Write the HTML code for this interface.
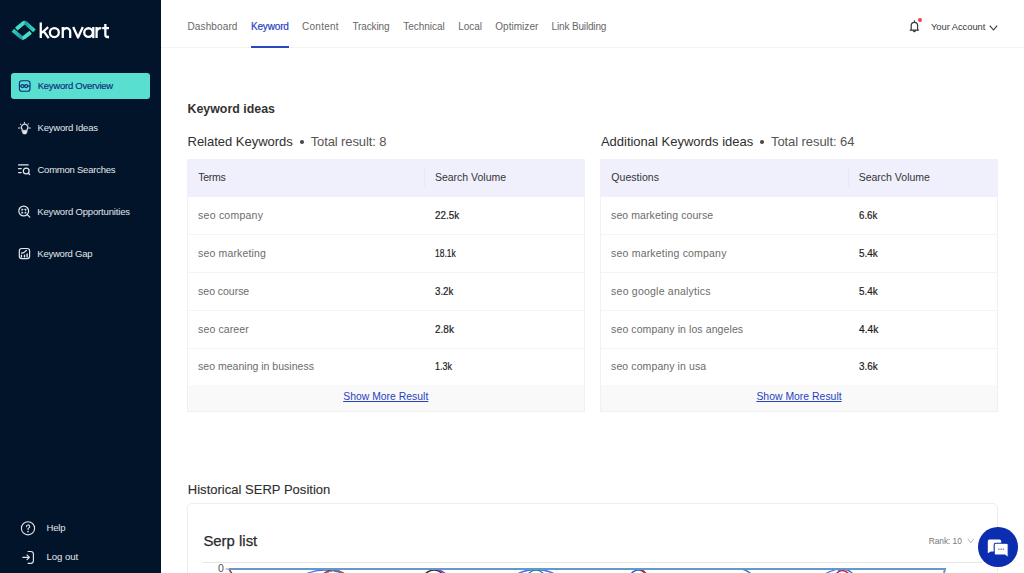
<!DOCTYPE html>
<html><head><meta charset="utf-8"><title>Konvart</title>
<style>
html,body{margin:0;padding:0;width:1024px;height:573px;overflow:hidden;background:#fff;}
body{position:relative;font-family:"Liberation Sans",sans-serif;}
#side{position:absolute;left:0;top:0;width:161px;height:573px;background:#011429;}
.t{position:absolute;white-space:nowrap;}
svg{display:block;}
</style></head><body>
<div id="side"></div>
<svg style="position:absolute;left:0;top:0" width="40" height="45" viewBox="0 0 40 45" fill="none">
<defs>
<linearGradient id="ga" gradientUnits="userSpaceOnUse" x1="15" y1="0" x2="35" y2="0">
<stop offset="0" stop-color="#43dfca"/><stop offset="0.45" stop-color="#3fdcc8"/><stop offset="0.52" stop-color="#1a99a3"/><stop offset="1" stop-color="#34e3c6"/></linearGradient>
<linearGradient id="gb" gradientUnits="userSpaceOnUse" x1="12" y1="0" x2="32" y2="0">
<stop offset="0" stop-color="#2ed8c0"/><stop offset="0.48" stop-color="#1a9ca4"/><stop offset="0.56" stop-color="#45e2cb"/><stop offset="1" stop-color="#48e0cc"/></linearGradient>
</defs>
<path d="M16.3 29 L23.2 23.2 Q24.6 22.1 26 23.3 L34.4 30.9" stroke="url(#ga)" stroke-width="3.8"/>
<path d="M12.9 30.3 L21.3 37.4 Q22.7 38.6 24.1 37.4 L30.7 32.2" stroke="url(#gb)" stroke-width="3.8"/>
</svg>
<svg style="position:absolute;left:0;top:0" width="120" height="45" viewBox="0 0 120 45" fill="none" stroke="#fff" stroke-width="2.3">
<path d="M40.75 22.6 V38.1 M48.2 27.2 L41.6 33 M43.8 31.3 L48.7 38.1"/>
<circle cx="54.35" cy="32.55" r="4.5"/>
<path d="M62.75 27 V38.1 M62.75 38.1 V31.9 a3.72 3.72 0 0 1 7.45 0 V38.1"/>
<path d="M73.2 27 L78 37.5 L82.8 27" stroke-linejoin="round"/>
<circle cx="88.5" cy="32.55" r="4.3"/>
<path d="M93.3 27 V38.1"/>
<path d="M96.55 27 V38.1 M96.55 32.2 Q96.8 28.1 101.3 28.1"/>
<path d="M105.35 24 V34.8 Q105.35 37 107.5 37 H109 M102.2 28.2 H109"/>
</svg>
<div style="position:absolute;left:11px;top:73px;width:139px;height:26px;background:#58dfcf;border-radius:3px"></div>
<svg style="position:absolute;left:18px;top:80px" width="13" height="13" viewBox="0 0 13 13" fill="none" stroke="#102d7c" stroke-width="1.15">
<rect x="1.4" y="0.75" width="10.6" height="10.5" rx="2.5"/>
<circle cx="4.5" cy="6.1" r="1.55"/><circle cx="8.1" cy="6.1" r="1.55"/><path d="M1.6 6.1h1.3 M6 6.1h0.6 M9.7 6.1h2.2"/>
</svg>
<div class="t" style="left:37.70px;top:80px;font-size:9.5px;line-height:11px;color:#102d7c;letter-spacing:-0.246px;-webkit-text-stroke:0.15px #102d7c;">Keyword Overview</div>
<div class="t" style="left:37.50px;top:122px;font-size:9.5px;line-height:11px;color:#e4e7ec;letter-spacing:-0.195px;">Keyword Ideas</div>
<div class="t" style="left:37.50px;top:164px;font-size:9.5px;line-height:11px;color:#e4e7ec;letter-spacing:-0.237px;">Common Searches</div>
<div class="t" style="left:37.30px;top:206px;font-size:9.5px;line-height:11px;color:#e4e7ec;letter-spacing:-0.170px;">Keyword Opportunities</div>
<div class="t" style="left:37.30px;top:248px;font-size:9.5px;line-height:11px;color:#e4e7ec;letter-spacing:-0.236px;">Keyword Gap</div>
<div class="t" style="left:46.60px;top:522px;font-size:9.5px;line-height:11px;color:#e4e7ec;letter-spacing:-0.213px;">Help</div>
<div class="t" style="left:46.60px;top:551px;font-size:9.6px;line-height:12px;color:#e4e7ec;letter-spacing:-0.088px;">Log out</div>
<svg style="position:absolute;left:14px;top:118px" width="22" height="20" viewBox="14 118 22 20" fill="none" stroke="#e4e7ec" stroke-width="1.1" stroke-linecap="round">
<path d="M24.4 122.3v0.8 M20.6 124.1l0.2 0.2 M28.3 123.9l-0.2 0.2 M18.5 128h1.4 M29 128h1.3"/>
<path d="M22.3 129.6 A3.2 3.2 0 1 1 27 129.6"/>
<path d="M21.9 130.2 H27.4 L26.6 133.2 Q26.3 134 25.5 134 H23.8 Q23 134 22.7 133.2 Z M24.65 131.6 L24.65 131.6" fill="#e4e7ec" stroke-width="0.5"/>
</svg>
<svg style="position:absolute;left:14px;top:160px" width="22" height="20" viewBox="14 160 22 20" fill="none" stroke="#e4e7ec" stroke-width="1.25" stroke-linecap="round">
<path d="M18.6 164.9h9.6 M18.6 168.7h2.6 M18.6 172.5h2.6"/>
<circle cx="26.2" cy="171" r="2.9"/><path d="M28.3 173.1l1.3 1.4"/>
</svg>
<svg style="position:absolute;left:14px;top:202px" width="22" height="20" viewBox="14 202 22 20" fill="none" stroke="#e4e7ec" stroke-width="1.2" stroke-linecap="round">
<circle cx="23.7" cy="211" r="4.9"/><path d="M27.3 214.6l2.5 2.5"/>
<path d="M22 210.2v-0.8h0.8 M24.9 209.4h0.8v0.8 M25.7 212v0.8h-0.8 M22.8 212.8h-0.8v-0.8"/>
</svg>
<svg style="position:absolute;left:14px;top:243px" width="22" height="20" viewBox="14 243 22 20" fill="none" stroke="#e4e7ec" stroke-width="1.2" stroke-linecap="round">
<rect x="19.3" y="248.5" width="10.3" height="10.1" rx="2.4"/>
<path d="M21.5 256.9v-1.6 M24.5 256.9v-1.6 M27.1 256.9v-2.9" stroke-width="1.4"/>
<path d="M21.5 253.2 L23.7 252.6 L26.1 250.6" />
<circle cx="26.2" cy="250.5" r="0.7" fill="#e4e7ec" stroke="none"/>
</svg>
<svg style="position:absolute;left:16px;top:515px" width="24" height="25" viewBox="16 515 24 25" fill="none" stroke="#e4e7ec" stroke-width="1.1" stroke-linecap="round">
<circle cx="28" cy="528.3" r="6.6"/>
<path d="M26.4 526.6 a1.65 1.65 0 1 1 2.3 1.5 c-0.45 0.2 -0.65 0.45 -0.65 0.9 v0.5"/>
<circle cx="28.05" cy="531.6" r="0.3" fill="#e4e7ec"/>
</svg>
<svg style="position:absolute;left:16px;top:545px" width="24" height="25" viewBox="16 545 24 25" fill="none" stroke="#e4e7ec" stroke-width="1.15" stroke-linecap="round" stroke-linejoin="round">
<path d="M28.1 551.5h2.8 a2.5 2.5 0 0 1 2.5 2.5 v6.8 a2.5 2.5 0 0 1 -2.5 2.5 h-2.8"/>
<path d="M22.8 557.3h6.6 M27 554.9l2.4 2.4-2.4 2.4"/>
</svg>
<div style="position:absolute;left:161px;top:47px;width:863px;height:1px;background:#f3f3f3"></div>
<div class="t" style="left:187.50px;top:21px;font-size:10px;line-height:12px;color:#676767;letter-spacing:0.122px;">Dashboard</div>
<div class="t" style="left:302.00px;top:21px;font-size:10px;line-height:12px;color:#676767;letter-spacing:0.263px;">Content</div>
<div class="t" style="left:352.50px;top:21px;font-size:10px;line-height:12px;color:#676767;letter-spacing:-0.139px;">Tracking</div>
<div class="t" style="left:403.30px;top:21px;font-size:10px;line-height:12px;color:#676767;letter-spacing:-0.024px;">Technical</div>
<div class="t" style="left:458.30px;top:21px;font-size:10px;line-height:12px;color:#676767;letter-spacing:-0.052px;">Local</div>
<div class="t" style="left:495.30px;top:21px;font-size:10px;line-height:12px;color:#676767;letter-spacing:0.027px;">Optimizer</div>
<div class="t" style="left:551.60px;top:21px;font-size:10px;line-height:12px;color:#676767;letter-spacing:-0.159px;">Link Building</div>
<div class="t" style="left:250.90px;top:21px;font-size:10px;line-height:12px;color:#2942c2;letter-spacing:-0.151px;-webkit-text-stroke:0.2px #2942c2;">Keyword</div>
<div style="position:absolute;left:251px;top:45.5px;width:38px;height:2px;background:#2b46c4"></div>
<svg style="position:absolute;left:900px;top:12px" width="30" height="26" viewBox="900 12 30 26" fill="none" stroke="#383838" stroke-width="1.2" stroke-linejoin="round" stroke-linecap="round">
<path d="M914.4 20.9 v0.6"/>
<path d="M911.2 29.8 V25.6 a3.2 3.2 0 0 1 6.4 0 V29.8"/>
<path d="M910.2 30.1 H918.6"/>
<path d="M913.2 30.7 L914.4 31.7 L915.6 30.7"/>
</svg>
<div style="position:absolute;left:918.3px;top:18.1px;width:4.2px;height:4.2px;border-radius:50%;background:#f2434b"></div>
<div class="t" style="left:931.00px;top:21px;font-size:9.4px;line-height:11px;color:#3a3a3a;letter-spacing:-0.050px;">Your Account</div>
<svg style="position:absolute;left:989px;top:25px" width="9" height="6" viewBox="0 0 9 6" fill="none" stroke="#333" stroke-width="1.1"><path d="M0.8 0.6 L4.5 5 L8.2 0.6"/></svg>
<div class="t" style="left:187.50px;top:102px;font-size:12.4px;line-height:15px;color:#333333;letter-spacing:-0.002px;font-weight:bold;">Keyword ideas</div>
<div class="t" style="left:187.50px;top:134px;font-size:13px;line-height:16px;color:#2f2f2f;letter-spacing:-0.013px;">Related Keywords</div>
<div style="position:absolute;left:300.3px;top:140.2px;width:4px;height:4px;border-radius:50%;background:#444"></div>
<div class="t" style="left:310.70px;top:134px;font-size:13px;line-height:16px;color:#555;letter-spacing:-0.108px;">Total result: 8</div>
<div class="t" style="left:600.90px;top:134px;font-size:13px;line-height:16px;color:#2f2f2f;letter-spacing:-0.008px;">Additional Keywords ideas</div>
<div style="position:absolute;left:760px;top:140.2px;width:4px;height:4px;border-radius:50%;background:#444"></div>
<div class="t" style="left:771.00px;top:134px;font-size:13px;line-height:16px;color:#555;letter-spacing:-0.076px;">Total result: 64</div>
<div style="position:absolute;left:187px;top:159px;width:398px;height:252.5px;border:1px solid #f1f1f1;box-sizing:border-box;background:#fff"></div>
<div style="position:absolute;left:187px;top:159px;width:398px;height:38px;background:#eff0fc"></div>
<div style="position:absolute;left:424px;top:169px;width:1px;height:18px;background:#e9e7f3"></div>
<div class="t" style="left:198.30px;top:171px;font-size:10.5px;line-height:13px;color:#343434;letter-spacing:-0.296px;">Terms</div>
<div class="t" style="left:434.90px;top:171px;font-size:10.5px;line-height:13px;color:#343434;letter-spacing:-0.001px;">Search Volume</div>
<div class="t" style="left:198.10px;top:209px;font-size:10.5px;line-height:13px;color:#6b6b6b;letter-spacing:0.235px;">seo company</div>
<div class="t" style="left:434.90px;top:209px;font-size:11.2px;line-height:13px;color:#1c1c1c;transform:scaleX(0.8796);transform-origin:0 0;-webkit-text-stroke:0.2px #1c1c1c;">22.5k</div>
<div style="position:absolute;left:187px;top:234.2px;width:398px;height:1px;background:#f4f4f4"></div>
<div class="t" style="left:198.10px;top:247px;font-size:10.5px;line-height:13px;color:#6b6b6b;letter-spacing:0.146px;">seo marketing</div>
<div class="t" style="left:434.90px;top:247px;font-size:11.2px;line-height:13px;color:#1c1c1c;transform:scaleX(0.7555);transform-origin:0 0;-webkit-text-stroke:0.2px #1c1c1c;">18.1k</div>
<div style="position:absolute;left:187px;top:272.0px;width:398px;height:1px;background:#f4f4f4"></div>
<div class="t" style="left:198.10px;top:285px;font-size:10.5px;line-height:13px;color:#6b6b6b;letter-spacing:-0.029px;">seo course</div>
<div class="t" style="left:434.90px;top:285px;font-size:11.2px;line-height:13px;color:#1c1c1c;transform:scaleX(0.8692);transform-origin:0 0;-webkit-text-stroke:0.2px #1c1c1c;">3.2k</div>
<div style="position:absolute;left:187px;top:310.4px;width:398px;height:1px;background:#f4f4f4"></div>
<div class="t" style="left:198.10px;top:323px;font-size:10.5px;line-height:13px;color:#6b6b6b;letter-spacing:0.110px;">seo career</div>
<div class="t" style="left:434.90px;top:323px;font-size:11.2px;line-height:13px;color:#1c1c1c;transform:scaleX(0.8928);transform-origin:0 0;-webkit-text-stroke:0.2px #1c1c1c;">2.8k</div>
<div style="position:absolute;left:187px;top:347.8px;width:398px;height:1px;background:#f4f4f4"></div>
<div class="t" style="left:198.10px;top:360px;font-size:10.5px;line-height:13px;color:#6b6b6b;letter-spacing:0.010px;">seo meaning in business</div>
<div class="t" style="left:434.90px;top:360px;font-size:11.2px;line-height:13px;color:#1c1c1c;transform:scaleX(0.8030);transform-origin:0 0;-webkit-text-stroke:0.2px #1c1c1c;">1.3k</div>
<div style="position:absolute;left:187px;top:385px;width:398px;height:26.5px;background:#f9f9f9;border:1px solid #f0f0f0;border-top:none;box-sizing:border-box"></div>
<div class="t" style="left:343.20px;top:391px;font-size:10.4px;line-height:12px;color:#2642c0;letter-spacing:0.015px;text-decoration:underline;">Show More Result</div>
<div style="position:absolute;left:600px;top:159px;width:398px;height:252.5px;border:1px solid #f1f1f1;box-sizing:border-box;background:#fff"></div>
<div style="position:absolute;left:600px;top:159px;width:398px;height:38px;background:#eff0fc"></div>
<div style="position:absolute;left:848px;top:169px;width:1px;height:18px;background:#e9e7f3"></div>
<div class="t" style="left:611.30px;top:171px;font-size:10.5px;line-height:13px;color:#343434;letter-spacing:0.040px;">Questions</div>
<div class="t" style="left:858.70px;top:171px;font-size:10.5px;line-height:13px;color:#343434;letter-spacing:-0.001px;">Search Volume</div>
<div class="t" style="left:611.10px;top:209px;font-size:10.5px;line-height:13px;color:#6b6b6b;letter-spacing:0.085px;">seo marketing course</div>
<div class="t" style="left:858.70px;top:209px;font-size:11.2px;line-height:13px;color:#1c1c1c;transform:scaleX(0.8692);transform-origin:0 0;-webkit-text-stroke:0.2px #1c1c1c;">6.6k</div>
<div style="position:absolute;left:600px;top:234.2px;width:398px;height:1px;background:#f4f4f4"></div>
<div class="t" style="left:611.10px;top:247px;font-size:10.5px;line-height:13px;color:#6b6b6b;letter-spacing:0.191px;">seo marketing company</div>
<div class="t" style="left:858.70px;top:247px;font-size:11.2px;line-height:13px;color:#1c1c1c;transform:scaleX(0.8881);transform-origin:0 0;-webkit-text-stroke:0.2px #1c1c1c;">5.4k</div>
<div style="position:absolute;left:600px;top:272.0px;width:398px;height:1px;background:#f4f4f4"></div>
<div class="t" style="left:611.10px;top:285px;font-size:10.5px;line-height:13px;color:#6b6b6b;letter-spacing:0.224px;">seo google analytics</div>
<div class="t" style="left:858.70px;top:285px;font-size:11.2px;line-height:13px;color:#1c1c1c;transform:scaleX(0.8881);transform-origin:0 0;-webkit-text-stroke:0.2px #1c1c1c;">5.4k</div>
<div style="position:absolute;left:600px;top:310.4px;width:398px;height:1px;background:#f4f4f4"></div>
<div class="t" style="left:611.10px;top:323px;font-size:10.5px;line-height:13px;color:#6b6b6b;letter-spacing:0.097px;">seo company in los angeles</div>
<div class="t" style="left:858.70px;top:323px;font-size:11.2px;line-height:13px;color:#1c1c1c;transform:scaleX(0.9117);transform-origin:0 0;-webkit-text-stroke:0.2px #1c1c1c;">4.4k</div>
<div style="position:absolute;left:600px;top:347.8px;width:398px;height:1px;background:#f4f4f4"></div>
<div class="t" style="left:611.10px;top:360px;font-size:10.5px;line-height:13px;color:#6b6b6b;letter-spacing:0.095px;">seo company in usa</div>
<div class="t" style="left:858.70px;top:360px;font-size:11.2px;line-height:13px;color:#1c1c1c;transform:scaleX(0.8881);transform-origin:0 0;-webkit-text-stroke:0.2px #1c1c1c;">3.6k</div>
<div style="position:absolute;left:600px;top:385px;width:398px;height:26.5px;background:#f9f9f9;border:1px solid #f0f0f0;border-top:none;box-sizing:border-box"></div>
<div class="t" style="left:756.40px;top:391px;font-size:10.4px;line-height:12px;color:#2642c0;letter-spacing:0.022px;text-decoration:underline;">Show More Result</div>
<div class="t" style="left:187.80px;top:482px;font-size:13px;line-height:16px;color:#2e2e2e;letter-spacing:0.018px;-webkit-text-stroke:0.12px #2e2e2e;">Historical SERP Position</div>
<div style="position:absolute;left:187px;top:503px;width:811px;height:120px;border:1px solid #ededed;border-radius:5px;box-sizing:border-box"></div>
<div class="t" style="left:203.40px;top:532px;font-size:14.9px;line-height:18px;color:#2a2a2a;letter-spacing:0.009px;-webkit-text-stroke:0.25px #2a2a2a;">Serp list</div>
<div class="t" style="left:928.70px;top:536px;font-size:8.4px;line-height:10px;color:#777;letter-spacing:-0.046px;">Rank: 10</div>
<svg style="position:absolute;left:967px;top:538px" width="8" height="6" viewBox="0 0 8 6" fill="none" stroke="#aaa" stroke-width="0.9"><path d="M0.8 0.8 L3.8 4.8 L6.8 0.8"/></svg>
<div style="position:absolute;left:203px;top:562px;width:779px;height:1px;background:#e6e6e6"></div>
<div class="t" style="left:218.00px;top:562px;font-size:10.5px;line-height:13px;color:#555;letter-spacing:-0.140px;">0</div>
<svg style="position:absolute;left:200px;top:560px" width="760" height="13" viewBox="200 560 760 13" fill="none">
<path d="M225.5 569h4" stroke="#999" stroke-width="1"/>
<path d="M229 569 L231 573" stroke="#e0445a" stroke-width="1.4"/>
<path d="M229 569 L232 573" stroke="#444" stroke-width="1"/>
<path d="M303 575 Q325 565 347 575" stroke="#4a73e8" stroke-width="1.3"/>
<path d="M322 575 Q332 566 345 574" stroke="#c8203a" stroke-width="1.4"/>
<path d="M324 575 Q336 566 342 573" stroke="#2aa9a0" stroke-width="1"/>
<path d="M424 575 Q434 565 444 575" stroke="#333" stroke-width="1.4"/>
<path d="M438 570 Q443 571 447 575" stroke="#8e44c8" stroke-width="1.3"/>
<path d="M515 575 Q536 564 557 575" stroke="#4a73e8" stroke-width="1.3"/>
<path d="M527 575 Q536 565 545 575" stroke="#1a8aa0" stroke-width="1.3"/>
<path d="M630 575 Q638 565 647 575" stroke="#2a6ac8" stroke-width="1.4"/>
<path d="M639 569 Q644 570 647 575" stroke="#c8203a" stroke-width="1.4"/>
<path d="M742 569 Q747 570 751 574" stroke="#3a7ac0" stroke-width="1.6"/>
<path d="M823 575 Q835 568 845 569" stroke="#4a73e8" stroke-width="1.3"/>
<path d="M835 575 Q842 566 850 575" stroke="#c8203a" stroke-width="1.4"/>
<path d="M838 571 Q846 566 854 575" stroke="#3a7ac0" stroke-width="1.3"/>
<path d="M229 569 H945 L944 573" stroke="#6499cd" stroke-width="2"/>
</svg>
<div style="position:absolute;left:978px;top:527.2px;width:39.6px;height:39.6px;border-radius:50%;background:#0b2db0"></div>
<svg style="position:absolute;left:978px;top:527px" width="40" height="40" viewBox="978 527 40 40">
<path d="M989.4 539.4 H999.6 a1.6 1.6 0 0 1 1.6 1.6 V550 a1.6 1.6 0 0 1 -1.6 1.6 H990.8 L987.8 553.2 V541 a1.6 1.6 0 0 1 1.6 -1.6 Z" fill="#fff"/>
<path d="M995.8 543.2 H1006.6 a1.6 1.6 0 0 1 1.6 1.6 V557.6 L1004.8 555 H995.8 a1.6 1.6 0 0 1 -1.6 -1.6 V544.8 a1.6 1.6 0 0 1 1.6 -1.6 Z" fill="#fff" stroke="#0b2db0" stroke-width="1.1"/>
<circle cx="998.9" cy="549.2" r="0.6" fill="#0b2db0"/><circle cx="1001.1" cy="549.2" r="0.6" fill="#0b2db0"/><circle cx="1003.3" cy="549.2" r="0.6" fill="#0b2db0"/>
</svg>
</body></html>
